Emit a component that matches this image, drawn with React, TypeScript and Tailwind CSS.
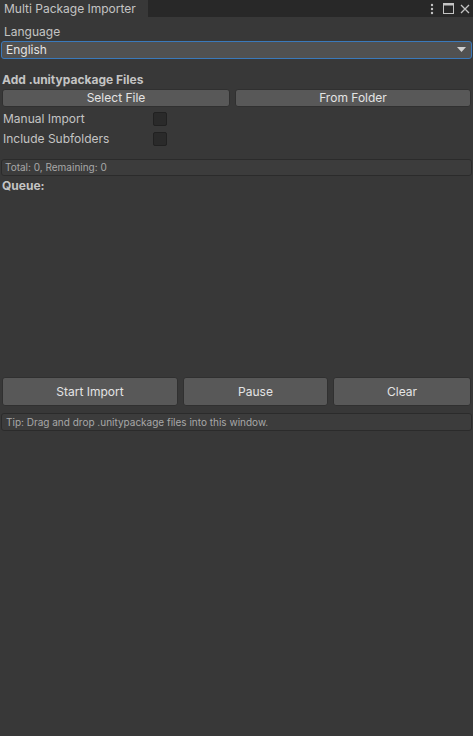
import React from 'react'

const font = { fontFamily: 'Inter, "Noto Sans", sans-serif' }

const Button = ({ label, className }: { label: string; className: string }) => (
    <button className={"flex items-center justify-center rounded-[3px] border border-[#303030] bg-[#585858] text-[12px] text-[#e4e4e4] " + className}>
        {label}
    </button>
)

const Toggle = ({ label }: { label: string }) => (
    <div className="flex h-[20px] items-center pl-[2px]">
        <span className="w-[150px] text-[12px] text-[#c4c4c4]">{label}</span>
        <span className="h-[14px] w-[14px] rounded-[2px] border border-[#212121] bg-[#2a2a2a]" />
    </div>
)

const App = () => {
    return (
        <div className="flex h-[736px] w-[473px] flex-col bg-[#383838]" style={font}>
            {/* tab strip */}
            <div className="flex h-[17px] items-stretch bg-[#282828]">
                <div className="flex w-[148px] items-center bg-[#383838] pl-[4px] text-[12px] text-[#c4c4c4]">
                    Multi Package Importer
                </div>
                <div className="flex-1" />
                <div className="flex items-center pr-[3px] text-[#c4c4c4]">
                    <svg width="4" height="12" viewBox="0 0 4 12"><circle cx="2" cy="2" r="1.2" fill="#c4c4c4" /><circle cx="2" cy="6" r="1.2" fill="#c4c4c4" /><circle cx="2" cy="10" r="1.2" fill="#c4c4c4" /></svg>
                    <svg className="ml-[9px]" width="11" height="11" viewBox="0 0 11 11"><rect x="0.5" y="0.5" width="10" height="10" fill="none" stroke="#c4c4c4" /><rect x="0.5" y="0.5" width="10" height="2" fill="#c4c4c4" /></svg>
                    <svg className="ml-[6px]" width="10" height="10" viewBox="0 0 10 10"><path d="M1 1L9 9M9 1L1 9" stroke="#c4c4c4" strokeWidth="1.3" /></svg>
                </div>
            </div>

            <div className="flex flex-col px-[1px]">
                <div className="mt-[6px] h-[18px] pl-[3px] text-[12px] text-[#c4c4c4]">Language</div>
                <div className="flex h-[18px] items-center justify-between rounded-[3px] border border-[#3a79bb] bg-[#515151] pl-[4px] pr-[5px] text-[12px] text-[#e4e4e4]">
                    <span>English</span>
                    <svg width="9" height="6" viewBox="0 0 9 6"><path d="M0 0H9L4.5 5Z" fill="#d0d0d0" /></svg>
                </div>

                <div className="mt-[12px] h-[18px] pl-[1px] text-[12px] font-bold text-[#c4c4c4]">Add .unitypackage Files</div>
                <div className="flex gap-[5px] px-[1px]">
                    <Button label="Select File" className="h-[18px] w-[228px]" />
                    <Button label="From Folder" className="h-[18px] flex-1" />
                </div>

                <div className="mt-[2px] flex flex-col">
                    <Toggle label="Manual Import" />
                    <Toggle label="Include Subfolders" />
                </div>

                <div className="mt-[10px] flex h-[17px] items-center rounded-[3px] border border-[#2b2b2b] bg-[#3c3c3c] pl-[3px] text-[10px] text-[#a8a8a8]">
                    Total: 0, Remaining: 0
                </div>
                <div className="mt-[1px] h-[18px] pl-[1px] text-[12px] font-bold text-[#c4c4c4]">Queue:</div>

                <div className="h-[182px]" />

                <div className="flex gap-[5px] px-[1px]">
                    <Button label="Start Import" className="h-[29px] w-[176px]" />
                    <Button label="Pause" className="h-[29px] w-[145px]" />
                    <Button label="Clear" className="h-[29px] flex-1" />
                </div>

                <div className="mt-[7px] flex h-[18px] items-center rounded-[3px] border border-[#2b2b2b] bg-[#3c3c3c] pl-[4px] text-[10px] text-[#a8a8a8]">
                    Tip: Drag and drop .unitypackage files into this window.
                </div>
            </div>
        </div>
    )
}

export default App
